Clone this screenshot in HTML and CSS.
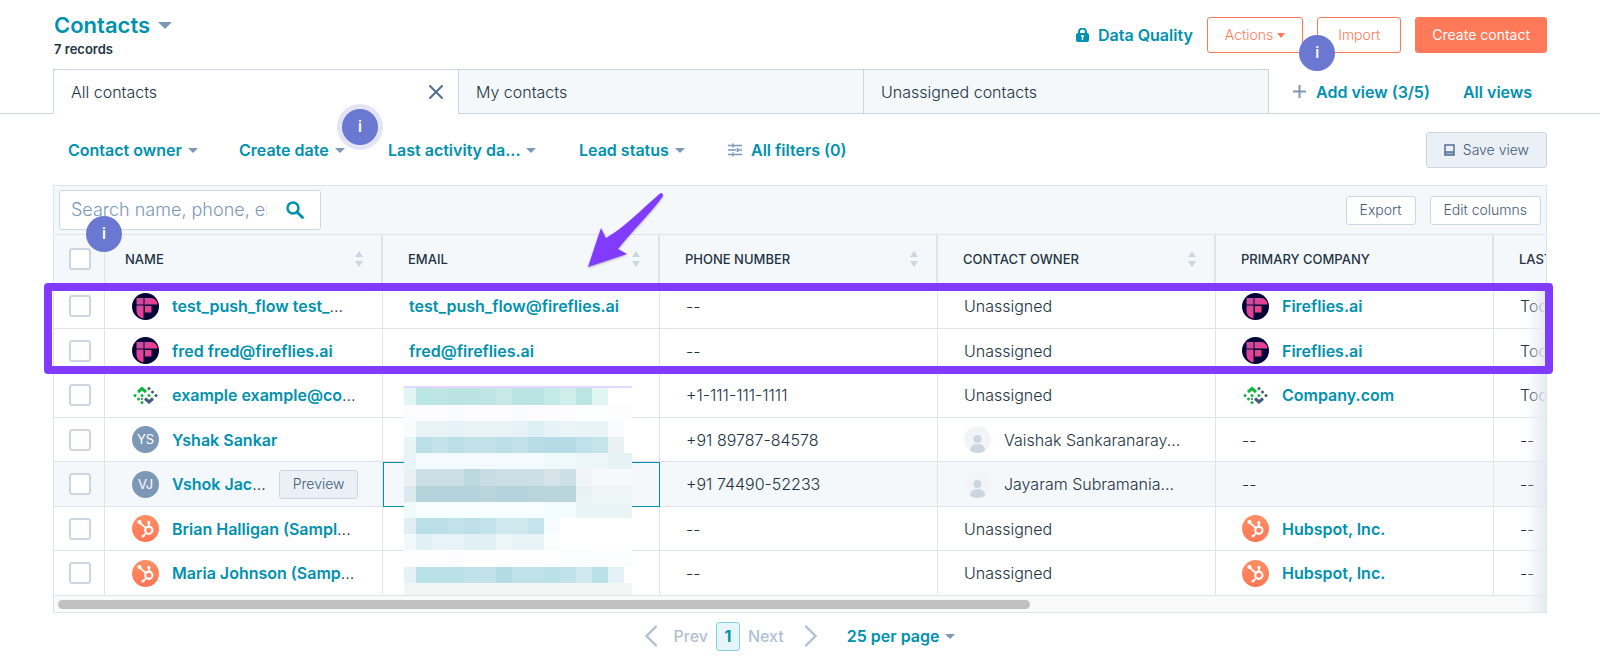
FILE: index.html
```html
<!DOCTYPE html>
<html lang="en">
<head>
<meta charset="utf-8">
<title>Contacts</title>
<link rel="stylesheet" href="styles.css">
</head>
<body>
<svg class="defs" aria-hidden="true">
  <defs>
    <linearGradient id="pink" x1="0" y1="0" x2="1" y2="1"><stop offset="0" stop-color="#c04fa5"/><stop offset="0.6" stop-color="#ee3d8f"/><stop offset="1" stop-color="#e81f6c"/></linearGradient>
    <linearGradient id="coral" x1="0" y1="0" x2="0" y2="1"><stop offset="0" stop-color="#ff8f64"/><stop offset="1" stop-color="#ff7656"/></linearGradient>
  </defs>
  <symbol id="fireflies" viewBox="0 0 27 27">
    <circle cx="13.500" cy="13.500" r="13.500" fill="#040338"/>
    <path fill="url(#pink)" d="M4.500 5H11.500V11.500H4.500ZM12.500 5H19Q25 5.500 25.500 11.500H12.500ZM4.500 12.500H11.500V25.500Q5 24 4.500 18ZM13 13H19.500V19.500H13Z"/>
  </symbol>
  <symbol id="company" viewBox="0 0 27 27">
    <path d="M6 10L10 6.500L14 10" fill="none" stroke="#12b540" stroke-width="3"/>
    <path d="M13 16.500L17 20L21 16.500" fill="none" stroke="#425b76" stroke-width="3"/>
    <g fill="#12b540"><circle cx="3" cy="13.500" r="1.500"/><circle cx="6.500" cy="17" r="1.500"/><circle cx="10" cy="13.500" r="1.500"/><circle cx="10" cy="20.500" r="1.500"/><circle cx="17" cy="13.500" r="1.500"/></g>
    <g fill="#425b76"><circle cx="17" cy="6.500" r="1.500"/><circle cx="20.500" cy="10" r="1.500"/><circle cx="24" cy="13.500" r="1.500"/><circle cx="10" cy="17" r="1"/></g>
  </symbol>
  <symbol id="sprocket" viewBox="0 0 27 27">
    <circle cx="13.500" cy="13.500" r="13.500" fill="url(#coral)"/>
    <g fill="none" stroke="#fff"><circle cx="16.800" cy="15.300" r="3.600" stroke-width="2.200"/><path d="M16.800 11.500V8M14 13L8 8M14.200 18L11.500 20.800" stroke-width="1.700"/></g>
    <g fill="#fff"><circle cx="16.800" cy="7.400" r="1.600"/><circle cx="7.500" cy="7" r="2.100"/><circle cx="11" cy="21" r="1.500"/></g>
  </symbol>
  <symbol id="person" viewBox="0 0 27 27">
    <circle cx="13.500" cy="13.500" r="13.500" fill="#f2f4f8"/>
    <circle cx="13.500" cy="13" r="4" fill="#cbd6e2"/>
    <path d="M6 25Q6 18 13.500 18T21 25Q13.500 29 6 25Z" fill="#cbd6e2"/>
  </symbol>
  <symbol id="sort" viewBox="0 0 8 16"><path d="M0 6L4 0L8 6ZM0 10H8L4 16Z" fill="#cbd6e2"/></symbol>
</svg>

<header class="top">
  <div class="title">
    <h1><button class="plain title-btn" type="button">Contacts <span class="caret caret-lg"></span></button></h1>
    <p>7 records</p>
  </div>
  <div class="top-actions">
    <a class="link quality" href="#"><svg width="13" height="15" viewBox="0 0 13 15"><path d="M3 6V4A3.500 3.500 0 0 1 10 4V6" fill="none" stroke="#0091ae" stroke-width="2"/><rect y="5" width="13" height="9" rx="2" fill="#0091ae"/><path d="M5 8H8M6.500 8V12" stroke="#fff" stroke-width="1.500"/></svg>Data Quality</a>
    <button class="btn outline actions" type="button">Actions <span class="caret caret-hot"></span></button>
    <div class="import-wrap">
      <button class="btn outline import" type="button">Import</button>
      <span class="tip tip-import">i</span>
    </div>
    <button class="btn primary" type="button">Create contact</button>
  </div>
</header>

<nav class="tabs">
  <div class="tab active"><a href="#">All contacts</a><button class="plain" type="button" aria-label="Close view"><svg width="14" height="14" viewBox="0 0 14 14"><path d="M1 1L13 13M13 1L1 13" stroke="#516f90" stroke-width="2" stroke-linecap="round"/></svg></button></div>
  <div class="tab"><a href="#">My contacts</a></div>
  <div class="tab"><a href="#">Unassigned contacts</a></div>
  <div class="tab-links">
    <button class="plain link add" type="button"><svg width="13" height="13" viewBox="0 0 13 13"><path d="M6.500 0.500V12.500M0.500 6.500H12.500" stroke="#7c98b6" stroke-width="2" stroke-linecap="round"/></svg>Add view (3/5)</button>
    <a class="link" href="#">All views</a>
  </div>
</nav>

<main>
  <div class="filters">
    <button class="plain link f-owner" type="button">Contact owner <span class="caret"></span></button>
    <button class="plain link f-created" type="button">Create date <span class="caret"></span><span class="tip tip-halo">i</span></button>
    <button class="plain link f-activity" type="button">Last activity da... <span class="caret"></span></button>
    <button class="plain link f-lead" type="button">Lead status <span class="caret"></span></button>
    <button class="plain link all" type="button"><svg width="14" height="14" viewBox="0 0 14 14"><path d="M0 2.500H4M6 2.500H14M0 7H8M10.500 7H14M0 11.500H4M6 11.500H14M5 0.500V4.500M9.500 5V9M5 9.500V13.500" stroke="#7c98b6" stroke-width="1.700"/></svg>All filters (0)</button>
    <button class="btn save" type="button"><svg width="11" height="12" viewBox="0 0 11 12"><path d="M1 1H10V8H1ZM1 8V11H10V8" fill="none" stroke="#516f90" stroke-width="1.500"/><path d="M1 8H10V11H1Z" fill="#516f90" opacity=".45"/></svg>Save view</button>
  </div>

  <section class="card">
    <div class="toolbar">
      <div class="search">
        <input type="text" aria-label="Search contacts" placeholder="Search name, phone, email addresses, or company">
        <svg width="18" height="18" viewBox="0 0 18 18"><circle cx="7" cy="7" r="5.500" fill="none" stroke="#0091ae" stroke-width="2.500"/><path d="M11 11L16.500 16.500" stroke="#0091ae" stroke-width="2.800" stroke-linecap="round"/></svg>
        <span class="tip tip-search">i</span>
      </div>
      <button class="btn small" type="button">Export</button>
      <button class="btn small" type="button">Edit columns</button>
    </div>
    <div class="scroller">
      <table>
        <colgroup><col class="c-check"><col><col class="c-email"><col><col><col><col></colgroup>
        <thead>
          <tr>
            <th><input type="checkbox" aria-label="Select all"></th>
            <th><div class="head">NAME<svg class="sort"><use href="#sort"/></svg></div></th>
            <th><div class="head">EMAIL<svg class="sort"><use href="#sort"/></svg></div></th>
            <th><div class="head">PHONE NUMBER<svg class="sort"><use href="#sort"/></svg></div></th>
            <th><div class="head">CONTACT OWNER<svg class="sort"><use href="#sort"/></svg></div></th>
            <th><div class="head">PRIMARY COMPANY</div></th>
            <th><div class="head">LAST ACTIVITY DATE</div></th>
          </tr>
        </thead>
        <tbody>
          <tr>
            <td><input type="checkbox" aria-label="Select test_push_flow"></td>
            <td><div class="cell"><svg class="av"><use href="#fireflies"/></svg><span><a class="link" href="#">test_push_flow test_</a>...</span></div></td>
            <td><a class="link" href="#">test_push_flow@fireflies.ai</a></td><td>--</td><td>Unassigned</td>
            <td><div class="cell"><svg class="av"><use href="#fireflies"/></svg><a class="link" href="#">Fireflies.ai</a></div></td><td>Today</td>
          </tr>
          <tr>
            <td><input type="checkbox" aria-label="Select fred"></td>
            <td><div class="cell"><svg class="av"><use href="#fireflies"/></svg><a class="link" href="#">fred fred@fireflies.ai</a></div></td>
            <td><a class="link" href="#">fred@fireflies.ai</a></td><td>--</td><td>Unassigned</td>
            <td><div class="cell"><svg class="av"><use href="#fireflies"/></svg><a class="link" href="#">Fireflies.ai</a></div></td><td>Today</td>
          </tr>
          <tr>
            <td><input type="checkbox" aria-label="Select example"></td>
            <td><div class="cell"><svg class="av"><use href="#company"/></svg><span><a class="link" href="#">example example@co</a>...</span></div></td>
            <td></td><td>+1-111-111-1111</td><td>Unassigned</td>
            <td><div class="cell"><svg class="av"><use href="#company"/></svg><a class="link" href="#">Company.com</a></div></td><td>Today</td>
          </tr>
          <tr>
            <td><input type="checkbox" aria-label="Select Yshak Sankar"></td>
            <td><div class="cell"><span class="av initials">YS</span><a class="link" href="#">Yshak Sankar</a></div></td>
            <td></td><td>+91 89787-84578</td>
            <td><div class="cell"><svg class="av"><use href="#person"/></svg>Vaishak Sankaranaray...</div></td><td>--</td><td>--</td>
          </tr>
          <tr class="hover">
            <td><input type="checkbox" aria-label="Select Vshok"></td>
            <td><div class="cell"><span class="av initials">VJ</span><span><a class="link" href="#">Vshok Jac</a>...</span><button class="btn small preview" type="button">Preview</button></div></td>
            <td class="focus"></td><td>+91 74490-52233</td>
            <td><div class="cell"><svg class="av"><use href="#person"/></svg>Jayaram Subramania...</div></td><td>--</td><td>--</td>
          </tr>
          <tr>
            <td><input type="checkbox" aria-label="Select Brian Halligan"></td>
            <td><div class="cell"><svg class="av"><use href="#sprocket"/></svg><span><a class="link" href="#">Brian Halligan (Sampl</a>...</span></div></td>
            <td></td><td>--</td><td>Unassigned</td>
            <td><div class="cell"><svg class="av"><use href="#sprocket"/></svg><a class="link" href="#">Hubspot, Inc.</a></div></td><td>--</td>
          </tr>
          <tr>
            <td><input type="checkbox" aria-label="Select Maria Johnson"></td>
            <td><div class="cell"><svg class="av"><use href="#sprocket"/></svg><span><a class="link" href="#">Maria Johnson (Samp</a>...</span></div></td>
            <td></td><td>--</td><td>Unassigned</td>
            <td><div class="cell"><svg class="av"><use href="#sprocket"/></svg><a class="link" href="#">Hubspot, Inc.</a></div></td><td>--</td>
          </tr>
        </tbody>
      </table>
    </div>
    <div class="track"><div class="thumb"></div></div>
    <div class="fade"></div>
    <svg class="mosaic" id="mosaic" width="228" height="209" viewBox="0 0 228 209" shape-rendering="crispEdges" aria-hidden="true"></svg>
    <div class="frame"></div>
    <svg class="arrow" width="78" height="76" viewBox="0 0 78 76" aria-hidden="true"><path d="M74 1.500Q77 0 77 4C65 21 46 39 32 57L41 62L2 75L15 36L20 46C38 36 56 17 74 1.500Z" fill="#813bff"/></svg>
  </section>

  <nav class="pager">
    <button class="plain page-nav" type="button" disabled><svg width="12" height="22" viewBox="0 0 12 22"><path d="M11 1.500L1.500 11L11 20.500" fill="none" stroke="#b0c1d4" stroke-width="2.400" stroke-linecap="round"/></svg>Prev</button>
    <button class="plain current" type="button">1</button>
    <button class="plain page-nav next" type="button" disabled>Next<svg width="12" height="22" viewBox="0 0 12 22"><path d="M1 1.500L10.500 11L1 20.500" fill="none" stroke="#b0c1d4" stroke-width="2.400" stroke-linecap="round"/></svg></button>
    <button class="plain link per-page" type="button">25 per page <span class="caret"></span></button>
  </nav>
</main>
<script src="mosaic.js"></script>
</body>
</html>
```

FILE: styles.css
```css
* { box-sizing: border-box; }

body {
  margin: 0;
  background: #fff;
  color: #213343;
  font: 300 16px/20px Inter, "Liberation Sans", sans-serif;
}

h1, p { margin: 0; }
a { color: inherit; text-decoration: none; }
svg { display: block; flex: none; }
.defs { position: absolute; width: 0; height: 0; }

.plain {
  padding: 0;
  border: 0;
  background: none;
  color: inherit;
  font: inherit;
}

.link {
  color: #0091ae;
  font-weight: 600;
}

button.link, a.link { white-space: nowrap; }

.caret {
  display: inline-block;
  margin-left: 2px;
  border: 5px solid transparent;
  border-top-color: #7c98b6;
  border-bottom: 0;
  vertical-align: 3px;
}

.caret-lg {
  border-width: 7px 7px 0;
  vertical-align: 4px;
}

.caret-hot {
  margin-left: 0;
  border-width: 5px 4px 0;
  border-top-color: #ff7a59;
}

.btn {
  display: flex;
  align-items: center;
  justify-content: center;
  gap: 8px;
  height: 36px;
  padding: 0 17px;
  border: 1px solid #cbd6e2;
  border-radius: 3px;
  background: #fff;
  color: #425b76;
  font: 300 14px/18px Inter, sans-serif;
  white-space: nowrap;
}

.outline { border-color: #ff7a59; color: #ff7a59; }
.import { padding: 0 20px; }
.primary { padding: 0 16px; border-color: #ff7a59; background: #ff7a59; color: #fff; font-weight: 400; }
.save { margin-left: auto; background: #eaf0f6; }
.small { height: 29px; padding: 0 13px; }

.tip {
  position: absolute;
  width: 36px;
  height: 36px;
  border-radius: 50%;
  background: #6a78d1;
  color: #fff;
  font: 600 15px/36px Inter, sans-serif;
  text-align: center;
  z-index: 3;
}

.top {
  display: flex;
  justify-content: space-between;
  height: 69px;
  padding: 12px 53px 0 54px;
}

.title-btn { color: #0091ae; font: 600 22px/26px Inter, sans-serif; }
.title p { margin-top: 2px; font-size: 13px; font-weight: 600; line-height: 18px; }

.top-actions {
  display: flex;
  align-items: center;
  gap: 14px;
  height: 36px;
  margin-top: 5px;
}

.quality { display: flex; align-items: center; gap: 9px; }
.actions { gap: 4px; }
.import-wrap { position: relative; }
.tip-import { left: -18px; top: 18px; }

.tabs {
  display: flex;
  height: 45px;
  padding-left: 53px;
  background: linear-gradient(#cbd6e2, #cbd6e2) bottom / 100% 1px no-repeat;
}

.tab {
  display: flex;
  flex: 0 1 405px;
  align-items: center;
  justify-content: space-between;
  padding: 0 15px 0 17px;
  border: 1px solid #cbd6e2;
  border-width: 1px 0 1px 1px;
  background: #f5f8fa;
}

.tab:nth-child(3) { flex-basis: 406px; border-right-width: 1px; }
.active { background: #fff; border-bottom-color: #fff; }

.tab-links {
  display: flex;
  flex: 1;
  align-items: center;
  justify-content: space-between;
  padding: 0 68px 0 24px;
}

.add { display: flex; align-items: center; gap: 10px; }

main { padding: 18px 53px 0; }

.filters {
  display: flex;
  align-items: center;
  height: 35px;
  padding-left: 15px;
}

.filters .link { position: relative; flex: none; text-align: left; }
.f-owner { width: 171px; }
.f-created { width: 149px; }
.f-activity { width: 191px; }
.f-lead { width: 149px; }
.filters .all { display: flex; align-items: center; gap: 9px; }
.tip-halo { left: 103px; top: -31px; box-shadow: 0 0 0 5px #e3e4f5; }

.card {
  position: relative;
  margin-top: 18px;
  border: 1px solid #dfe3eb;
  background: #f5f8fa;
}

.toolbar {
  display: flex;
  align-items: center;
  gap: 14px;
  height: 48px;
  padding: 0 5px;
}

.search {
  position: relative;
  display: flex;
  align-items: center;
  width: 262px;
  height: 40px;
  margin-right: auto;
  padding: 0 16px 0 11px;
  border: 1px solid #cbd6e2;
  border-radius: 3px;
  background: #fff;
}

.search input {
  flex: 1;
  min-width: 0;
  margin-right: 19px;
  padding: 0;
  border: 0;
  outline: 0;
  font: 300 18px/24px Inter, sans-serif;
}

.search input::placeholder { color: #7c98b6; }
.tip-search { left: 26px; top: 25px; }

.scroller { overflow: hidden; }

table {
  width: 1718px;
  table-layout: fixed;
  border-collapse: separate;
  border-spacing: 0;
  background: #fff;
}

col { width: 278px; }
.c-check { width: 51px; }
.c-email { width: 277px; }

th, td {
  height: 44px;
  padding: 0 0 0 26px;
  border: 1px solid #dfe3eb;
  border-width: 0 1px 1px 0;
  text-align: left;
  white-space: nowrap;
}

tbody tr:nth-child(odd) td { height: 45px; }

th {
  height: 50px;
  padding-left: 25px;
  border-top-width: 1px;
  border-right-width: 2px;
  background: #f5f8fa;
  font-size: 13px;
  font-weight: 500;
}

th:first-child { border-right-width: 1px; }
th:nth-child(2) { padding-left: 20px; }
td:nth-child(2) { padding-left: 27px; }
th:first-child, td:first-child { padding: 0 0 0 15px; }

.head { display: flex; align-items: center; justify-content: space-between; padding-right: 18px; }
.sort { width: 8px; height: 16px; }

.cell { display: flex; align-items: center; gap: 13px; }
.av { width: 27px; height: 27px; }

.initials {
  border-radius: 50%;
  background: #7c98b6;
  color: #fff;
  font-size: 13px;
  font-weight: 400;
  line-height: 27px;
  text-align: center;
}

.hover td { background: #f5f8fa; }
.hover .focus { border: 1px solid #0091ae; }
.preview { background: #eaf0f6; }

input[type="checkbox"] {
  display: block;
  appearance: none;
  width: 22px;
  height: 22px;
  margin: 0;
  border: 2px solid #cbd6e2;
  border-radius: 3px;
  background: #fff;
}

.track { height: 16px; padding: 4px 4px 0; background: #fafafa; }
.thumb { width: 65.500%; height: 9px; border-radius: 5px; background: #c1c1c1; }

.fade {
  position: absolute;
  top: 98px;
  right: 0;
  bottom: 0;
  width: 20px;
  background: linear-gradient(to right, rgba(234, 240, 246, 0), #e5ebf2);
}

.mosaic { position: absolute; left: 350px; top: 200px; }

.frame {
  position: absolute;
  top: 97px;
  left: -10px;
  right: -7px;
  height: 91px;
  border: 8px solid #813bff;
  border-radius: 4px;
}

.arrow {
  position: absolute;
  left: 532px;
  top: 6px;
  filter: drop-shadow(0 1px 1px rgba(0, 0, 0, 0.3));
}

.pager {
  display: flex;
  align-items: center;
  justify-content: center;
  height: 46px;
}

.page-nav { display: flex; align-items: center; gap: 17px; color: #b0c1d4; font-weight: 500; }
.next { gap: 21px; }

.current {
  width: 24px;
  height: 29px;
  margin: 0 8px;
  border: 1px solid #7fd1de;
  border-radius: 3px;
  background: #e5f5f8;
  color: #0091ae;
  font-weight: 700;
}

.per-page { margin-left: 30px; }
```

FILE: mosaic.js
```js
// Blurred-out email addresses: one colour per block, row by row.
const rows = [
  [0, 2, "e3d6ff*15"],
  [2, 17, "e3f5f3 bbe6e4 bee6e5 bae3e2*2 bfe6e5 c6e9e7 bae4e3*2 c3eae7 d0eeec bbe5e3 e1f5f1 ffffff*2"],
  [19, 16, "fcfcfe*3 f9fbff fcfcfe*3 f9fbff fcfcfe*3 fdfefe*2 fdfdfe*2"],
  [35, 16, "f8fcfc e8f3f6*2 e5f2f8 e8f3f6*3 e6f2f8 dceff2 e5f2f8 ebf5f8 e8f4f6*2 fafbfe ffffff"],
  [51, 16, "e8f5f7 bbdee7 c3e2e9 bbdee7 c0e1e8*2 bbdee7 c0e1e8 b8dce6 b5dce6*2 c0e1e9 c5e4ea e9f1f3 ffffff"],
  [67, 16, "e8f4f7 f4fbfe*8 eff9fb*2 ecf6f8*2 e5f3f6*2"],
  [83, 17, "eaf0f4 cbdfe5*3 bed8df c7dce3 cbdfe5*3 d6e3e9 cbdfe5 f1f5f9 f6f8fb*3"],
  [100, 16, "dceaf0 b5d3da*4 bad5dc b5d3da*2 bad5dc*3 e9f1f5 eef5f7*3"],
  [116, 16, "f0fafb f7feff*8 f2fbfd*2 e8f4f6*4"],
  [132, 16, "e0eff5 bbdee7*2 c3e3ea bfe0e8 c3e3ea cfe8ed*2 c4e3ea f7fdff ffffff*5"],
  [148, 16, "f2f9fb e1f0f5 e6f3f9*2 e1f0f5*2 edf6f9 e6f3f7*2 fbfdfd ffffff*5"],
  [164, 17, "fefefe*3 fcfcff fefefe*6 fafdfd*2 fcfdfe*3"],
  [181, 16, "e2f2f7 bae0e8*3 c1e2ea*2 b2dbe5 bfe2e9*2 bae0e8 c1e2ea d0e9f1 b9dfe7 e4f2f7 ffffff"],
  [197, 12, "f4f5f5*15"]
];
const svg = document.getElementById("mosaic");
for (const [y, height, spec] of rows) {
  let col = 0;
  for (const part of spec.split(" ")) {
    const [color, count = 1] = part.split("*");
    for (let n = 0; n < count; n++, col++) {
      const rect = document.createElementNS("http://www.w3.org/2000/svg", "rect");
      rect.setAttribute("x", col ? col * 16 - 4 : 0);
      rect.setAttribute("y", y);
      rect.setAttribute("width", col ? 16 : 12);
      rect.setAttribute("height", height);
      rect.setAttribute("fill", "#" + color);
      svg.append(rect);
    }
  }
}
```
